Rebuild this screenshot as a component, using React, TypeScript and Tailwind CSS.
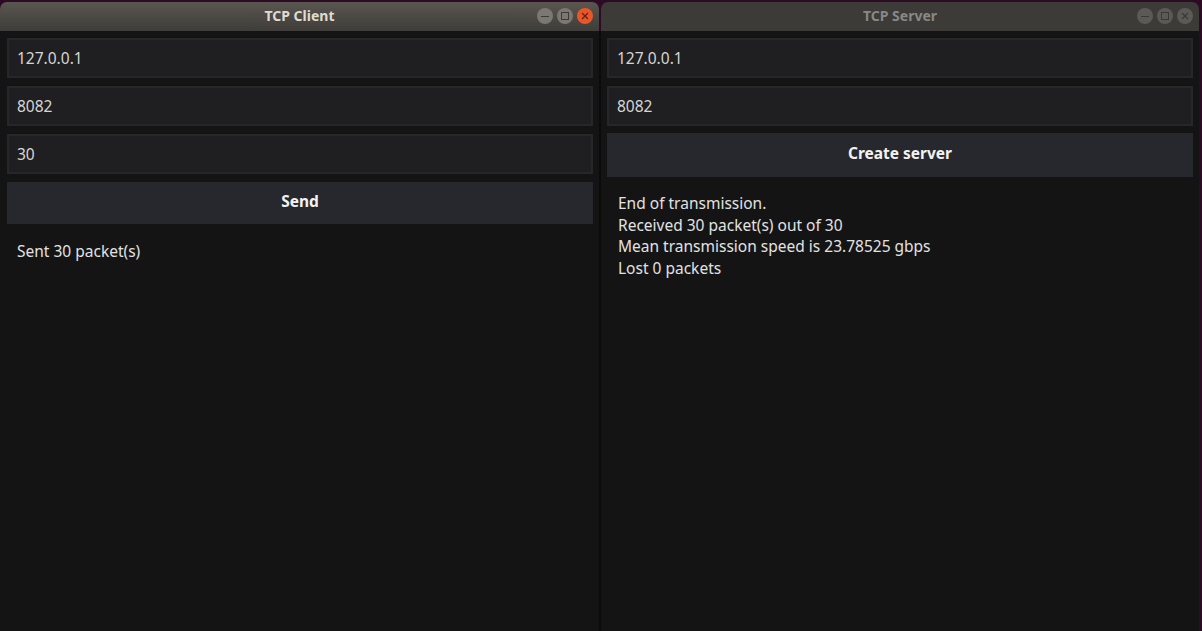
import { ReactNode } from "react";

const font = { fontFamily: '"Noto Sans", "Open Sans", sans-serif' };

function TitleBar({ title, active }: { title: string; active: boolean }) {
    return (
        <div
            className={`relative h-[29px] rounded-t-[7px] flex items-center justify-center pb-[2px] ${active ? "bg-gradient-to-b from-[#5a5650] to-[#3f3d39]" : "bg-[#3c3b38]"}`}
        >
            <span className={`text-[14px] font-bold ${active ? "text-[#dfdbd2]" : "text-[#898885]"}`}>{title}</span>
            <div className="absolute right-[6px] top-[6px] flex gap-[4px]">
                <div className={`w-[16px] h-[16px] rounded-full flex items-center justify-center ${active ? "bg-[#7b7873]" : "bg-[#5b5a57]"}`}>
                    <div className={`w-[8px] h-[1px] ${active ? "bg-[#3c3a37]" : "bg-[#3a3937]"}`} />
                </div>
                <div className={`w-[16px] h-[16px] rounded-full flex items-center justify-center ${active ? "bg-[#7b7873]" : "bg-[#5b5a57]"}`}>
                    <div className={`w-[8px] h-[8px] border ${active ? "border-[#3c3a37]" : "border-[#3a3937]"}`} />
                </div>
                <div className={`w-[16px] h-[16px] rounded-full flex items-center justify-center ${active ? "bg-[#e9562a]" : "bg-[#5b5a57]"}`}>
                    <svg width="8" height="8" viewBox="0 0 8 8">
                        <path d="M1 1 L7 7 M7 1 L1 7" stroke={active ? "#5a2210" : "#3a3937"} strokeWidth="1.2" />
                    </svg>
                </div>
            </div>
        </div>
    );
}

function Field({ value }: { value: string }) {
    return (
        <div className="h-[40px] bg-[#1f1f21] border-2 border-[#272729] flex items-center px-[8px] pt-[2px] text-[15.5px] text-[#d6d6d6]">
            {value}
        </div>
    );
}

function Window({ title, active, children, className }: { title: string; active: boolean; children: ReactNode; className: string }) {
    return (
        <div className={`flex flex-col ${className}`}>
            <TitleBar title={title} active={active} />
            <div className="flex-1 bg-[#141414]">{children}</div>
        </div>
    );
}

export default function App() {
    return (
        <div className="w-[1202px] h-[631px] bg-[#2d0b24] pt-[2px] flex overflow-hidden" style={font}>
            <Window title="TCP Client" active className="w-[599px]">
                <div className="pt-[7px] pl-[7px] pr-[6px] flex flex-col gap-[8px]">
                    <Field value="127.0.0.1" />
                    <Field value="8082" />
                    <Field value="30" />
                    <button className="h-[42px] bg-[#27282d] text-[15.5px] font-bold text-[#f2f2f2] pb-[2px]">Send</button>
                </div>
                <div className="px-[17px] pt-[16px] text-[15.5px] leading-[22px] text-[#e2e2e2]">Sent 30 packet(s)</div>
            </Window>
            <div className="w-[2px] bg-[#0b0b0b] mt-[29px]" />
            <Window title="TCP Server" active={false} className="w-[598px]">
                <div className="pt-[7px] pl-[6px] pr-[6px] flex flex-col gap-[8px]">
                    <Field value="127.0.0.1" />
                    <Field value="8082" />
                    <button className="h-[44px] -mt-[1px] bg-[#27282d] text-[15.5px] font-bold text-[#f2f2f2] pb-[2px]">Create server</button>
                </div>
                <div className="px-[17px] pt-[16px] text-[15.5px] leading-[21.7px] text-[#e2e2e2]">
                    <div>End of transmission.</div>
                    <div>Received 30 packet(s) out of 30</div>
                    <div>Mean transmission speed is 23.78525 gbps</div>
                    <div>Lost 0 packets</div>
                </div>
            </Window>
        </div>
    );
}
